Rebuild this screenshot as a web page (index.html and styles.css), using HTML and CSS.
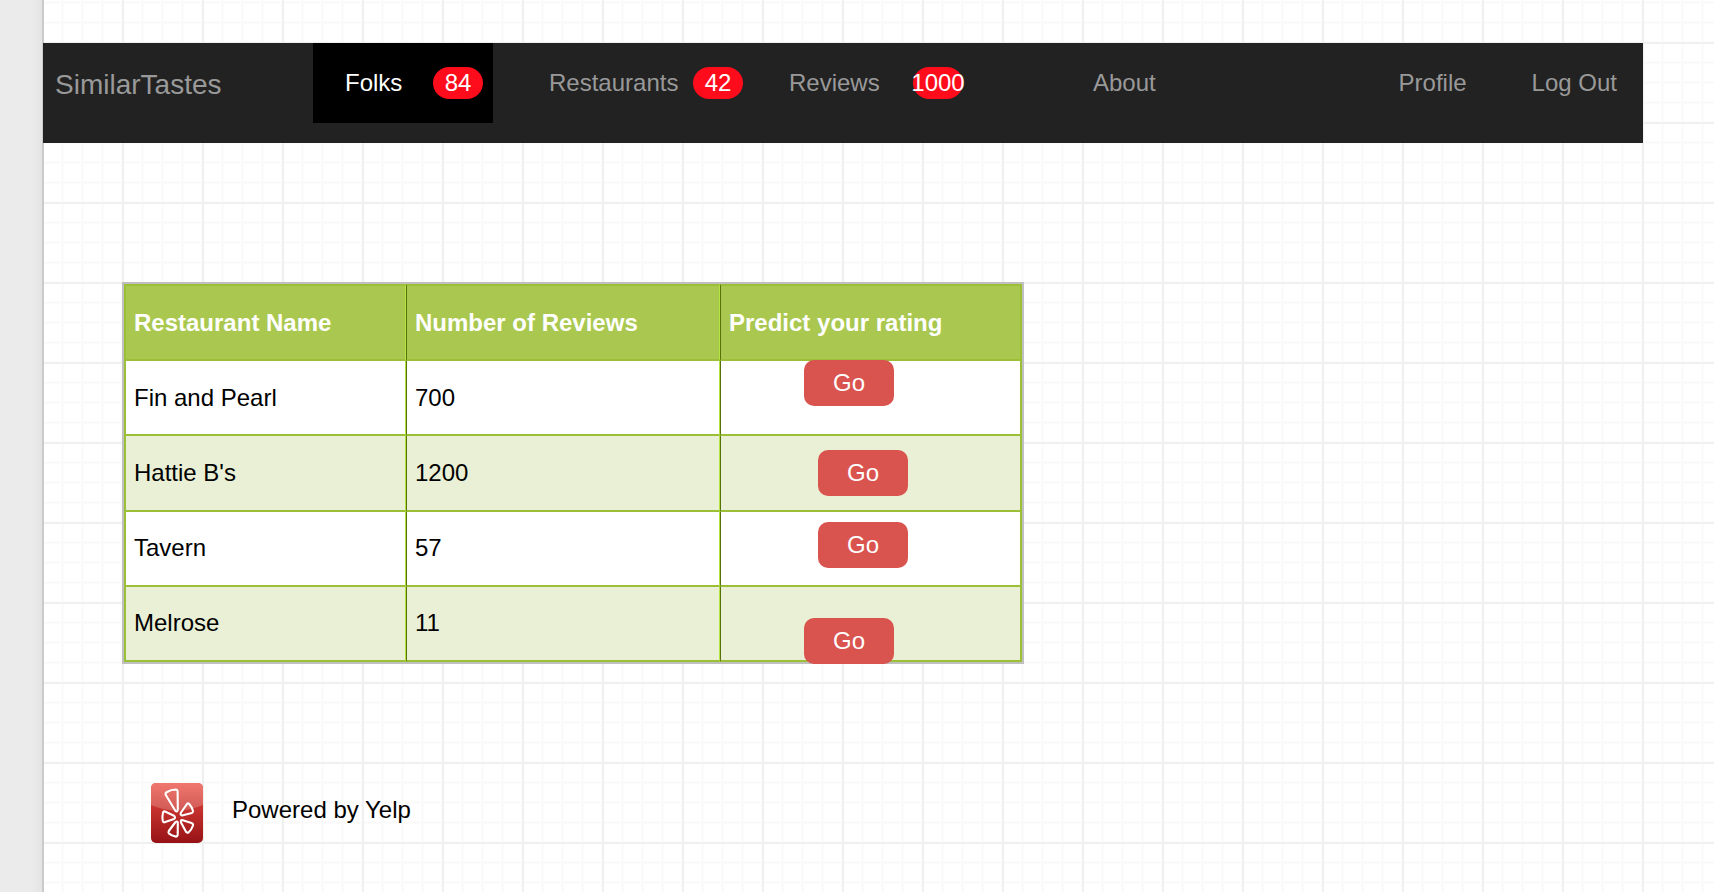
FILE: index.html
```
<!DOCTYPE html>
<html lang="en">
<head>
<meta charset="utf-8">
<title>SimilarTastes</title>
<link rel="stylesheet" href="styles.css">
</head>
<body>
<div class="page">
  <aside class="gutter"></aside>
  <div class="sheet">
    <nav class="navbar">
      <a class="brand" href="#">SimilarTastes</a>
      <ul class="menu">
        <li><a class="item item-folks active" href="#">Folks <span class="badge">84</span></a></li>
        <li><a class="item item-restaurants" href="#">Restaurants <span class="badge">42</span></a></li>
        <li><a class="item item-reviews" href="#">Reviews <span class="badge">1000</span></a></li>
        <li><a class="item item-about" href="#">About</a></li>
      </ul>
      <ul class="menu menu-right">
        <li><a class="item" href="#">Profile</a></li>
        <li><a class="item" href="#">Log Out</a></li>
      </ul>
    </nav>
    <main class="content">
      <table class="ratings">
        <colgroup><col class="col-name"><col class="col-count"><col class="col-go"></colgroup>
        <thead>
          <tr><th>Restaurant Name</th><th>Number of Reviews</th><th>Predict your rating</th></tr>
        </thead>
        <tbody>
          <tr><td>Fin and Pearl</td><td>700</td><td class="action action-top"><button class="go" type="button">Go</button></td></tr>
          <tr><td>Hattie B's</td><td>1200</td><td class="action action-shift"><button class="go" type="button">Go</button></td></tr>
          <tr><td>Tavern</td><td>57</td><td class="action action-shift action-raised"><button class="go" type="button">Go</button></td></tr>
          <tr><td>Melrose</td><td>11</td><td class="action action-bottom"><button class="go" type="button">Go</button></td></tr>
        </tbody>
      </table>
      <footer class="powered">
        <svg class="logo" viewBox="0 0 52 60" aria-hidden="true">
          <defs>
            <linearGradient id="base" x1="0" y1="0" x2="0" y2="1">
              <stop offset="0" stop-color="#e8443c"/><stop offset=".4" stop-color="#c93430"/><stop offset="1" stop-color="#961216"/>
            </linearGradient>
            <linearGradient id="gloss" x1="0" y1="0" x2="0" y2="1">
              <stop offset="0" stop-color="#f0776f"/><stop offset="1" stop-color="#d05a55"/>
            </linearGradient>
            <clipPath id="round"><rect width="52" height="60" rx="5"/></clipPath>
          </defs>
          <g clip-path="url(#round)">
            <rect width="52" height="60" fill="url(#base)"/>
            <path d="M0 0H52V22Q26 33 0 22Z" fill="url(#gloss)"/>
          </g>
          <g fill="none" stroke="#fff" stroke-width="2.1" stroke-linejoin="round">
            <path d="M16 9Q20 6.500 25 6.500Q26.500 6.600 26.600 8L26.800 26.500Q26.500 29.500 24.500 28L14.800 12Q14 10 16 9Z"/>
            <path d="M30 29.500L36 21Q37 19.800 38.200 21Q41 24 42 28Q42 29.500 40.800 30L31 32.500Q28.800 32 30 29.500Z"/>
            <path d="M31 37L40.500 40Q42.400 40.800 42 42.500Q40.500 47 37.500 49.500Q36.200 50 35 48.800L30 39.500Q29.500 37 31 37Z"/>
            <path d="M26.800 39.500L26.700 52Q26.400 53.500 25 53.600Q20.500 53 18 50.500Q17 49.300 17.800 48L24.500 39Q26.300 37.800 26.800 39.500Z"/>
            <path d="M23 36L13.500 39.300Q12.200 39.500 11.800 38Q11 33.500 12 29.500Q12.600 28 14 28.500L23 32.800Q25 34.800 23 36Z"/>
          </g>
        </svg>
        <span>Powered by Yelp</span>
      </footer>
    </main>
  </div>
</div>
</body>
</html>
```
FILE: styles.css
```
* { box-sizing: border-box; }

body {
  margin: 0;
  font: 24px/28px "Liberation Sans", Arial, Helvetica, sans-serif;
  color: #000;
}

.page {
  display: flex;
  min-height: 100vh;
}

.gutter {
  flex: none;
  width: 43px;
  background: linear-gradient(to right, #ebebeb 32px, #e4e4e4);
  border-right: 1px solid #cacaca;
}

.sheet {
  flex: 1;
  min-width: 0;
  padding-top: 43px;
  background-color: #fff;
  background-image:
    linear-gradient(to right, #cacaca 1px, transparent 1px),
    linear-gradient(to right, #f0f0f0 2px, transparent 2px),
    linear-gradient(to bottom, #f0f0f0 2px, transparent 2px),
    linear-gradient(to right, #fcfcfc 1px, #f9f9f9 1px 2px, #fcfcfc 2px 3px, transparent 3px),
    linear-gradient(to bottom, #fcfcfc 1px, #f9f9f9 1px 2px, #fcfcfc 2px 3px, transparent 3px);
  background-size: 100% 100%, 80px 80px, 80px 80px, 20px 20px, 20px 20px;
  background-position: 0 0, -1px 42px, 0 42px, -2px 1px, -2px 1px;
  background-repeat: no-repeat, repeat, repeat, repeat, repeat;
}

.navbar {
  display: flex;
  align-items: flex-start;
  height: 100px;
  margin-right: 71px;
  background: #222;
}

.brand {
  width: 270px;
  padding: 2px 0 0 12px;
  font-size: 28px;
  line-height: 80px;
  color: #999;
  text-decoration: none;
}

.menu {
  display: flex;
  margin: 0;
  padding: 0;
  list-style: none;
}

.menu-right {
  gap: 3px;
  margin-left: auto;
}

.item {
  display: flex;
  align-items: center;
  justify-content: space-between;
  height: 80px;
  padding: 0 26px 0 36px;
  line-height: 30px;
  color: #999;
  text-decoration: none;
}

.item-folks { width: 180px; padding: 0 10px 0 32px; }
.item-restaurants { width: 260px; padding: 0 10px 0 56px; }
.item-reviews { width: 220px; padding: 0 10px 0 36px; }
.item-about { padding-left: 120px; }

.active {
  background: #000;
  color: #fff;
}

.badge {
  display: flex;
  align-items: center;
  justify-content: center;
  width: 50px;
  height: 32px;
  border-radius: 16px;
  background: #ff0c1c;
  color: #fff;
}

.content { padding: 139px 79px 48px; }

.ratings {
  width: 100%;
  max-width: 902px;
  height: 382px;
  table-layout: fixed;
  border: 2px solid #bfbfbf;
  border-spacing: 0;
  background: #fff;
}

.col-name { width: 282px; }
.col-count { width: 314px; }

.ratings th,
.ratings td {
  height: 75px;
  padding: 0 8px;
  border: 0 solid #9bbf37;
  border-bottom-width: 2px;
  text-align: left;
}

.ratings th {
  height: 77px;
  border-top-width: 2px;
  background: #aac84f;
  color: #fff;
}

.ratings tbody tr:nth-child(even) { background: #eaf0d5; }

.ratings tr > :first-child { border-left-width: 2px; }
.ratings tr > :last-child { border-right-width: 2px; }

.ratings tr > :not(:last-child) {
  border-right: 1px solid #b5e33f;
}

.ratings tr > :not(:first-child) {
  border-left: 1px solid #557206;
}

.ratings .action {
  padding: 0 0 0 83px;
}

.ratings .action-shift { padding-left: 97px; }
.ratings .action-raised { padding-bottom: 7px; }
.ratings .action-top { vertical-align: top; }
.ratings .action-bottom { vertical-align: bottom; }

.go {
  display: block;
  width: 90px;
  height: 46px;
  padding: 0;
  border: 0;
  border-radius: 10px;
  background: #d9534f;
  color: #fff;
  font: inherit;
}

.action-top .go { margin-top: -1px; }
.action-bottom .go { margin-bottom: -4px; }

.powered {
  display: flex;
  align-items: center;
  gap: 29px;
  margin-top: 119px;
  padding-left: 29px;
}

.powered span { padding-bottom: 6px; }

.logo {
  width: 52px;
  height: 60px;
}
```
